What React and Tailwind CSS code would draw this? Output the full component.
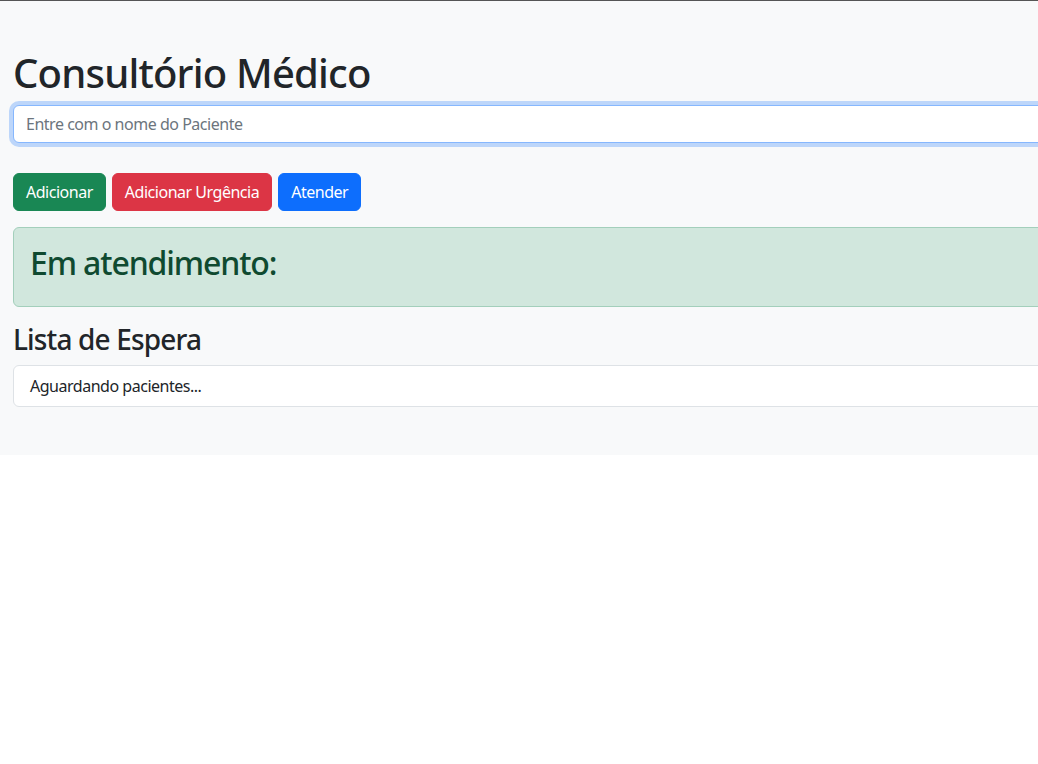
import React from 'react'

const font = { fontFamily: '"Noto Sans", "Open Sans", sans-serif' }

const App = () => {
    return (
        <div className='min-h-screen bg-white border-t border-[#555] overflow-hidden text-[#212529] tracking-[-0.03em]' style={font}>
            <div className='bg-[#f8f9fa] pt-12 pb-12 pl-[13px]'>
                <div className='w-[1300px]'>
                    <h1 className='text-[40px] leading-[1.2] font-medium mb-2 tracking-[-0.02em]'>Consultório Médico</h1>
                    <input
                        className='block w-full h-[38px] px-3 text-base bg-white border border-[#86b7fe] rounded-md shadow-[0_0_0_4px_rgba(13,110,253,0.25)] outline-none placeholder:text-[#6c757d] tracking-[-0.03em]'
                        type='text'
                        placeholder='Entre com o nome do Paciente'
                    />
                    <div className='flex gap-[6px] mt-[30px]'>
                        <button className='h-[38px] px-3 text-base text-white bg-[#198754] border border-[#198754] rounded-md tracking-[-0.03em]'>Adicionar</button>
                        <button className='h-[38px] px-3 text-base text-white bg-[#dc3545] border border-[#dc3545] rounded-md tracking-[-0.03em]'>Adicionar Urgência</button>
                        <button className='h-[38px] px-3 text-base text-white bg-[#0d6efd] border border-[#0d6efd] rounded-md tracking-[-0.03em]'>Atender</button>
                    </div>
                    <div className='mt-4 p-4 bg-[#d1e7dd] border border-[#a3cfbb] rounded-md text-[#0f4a30]'>
                        <h2 className='text-[32px] leading-[1.2] font-medium mb-2 tracking-[-0.035em]'>Em atendimento:</h2>
                    </div>
                    <h3 className='mt-4 text-[28px] leading-[1.2] font-medium mb-2 tracking-[-0.03em]'>Lista de Espera</h3>
                    <ul>
                        <li className='px-4 py-2 text-base leading-6 bg-white border border-[#dee2e6] rounded-md'>Aguardando pacientes...</li>
                    </ul>
                </div>
            </div>
        </div>
    )
}

export default App
